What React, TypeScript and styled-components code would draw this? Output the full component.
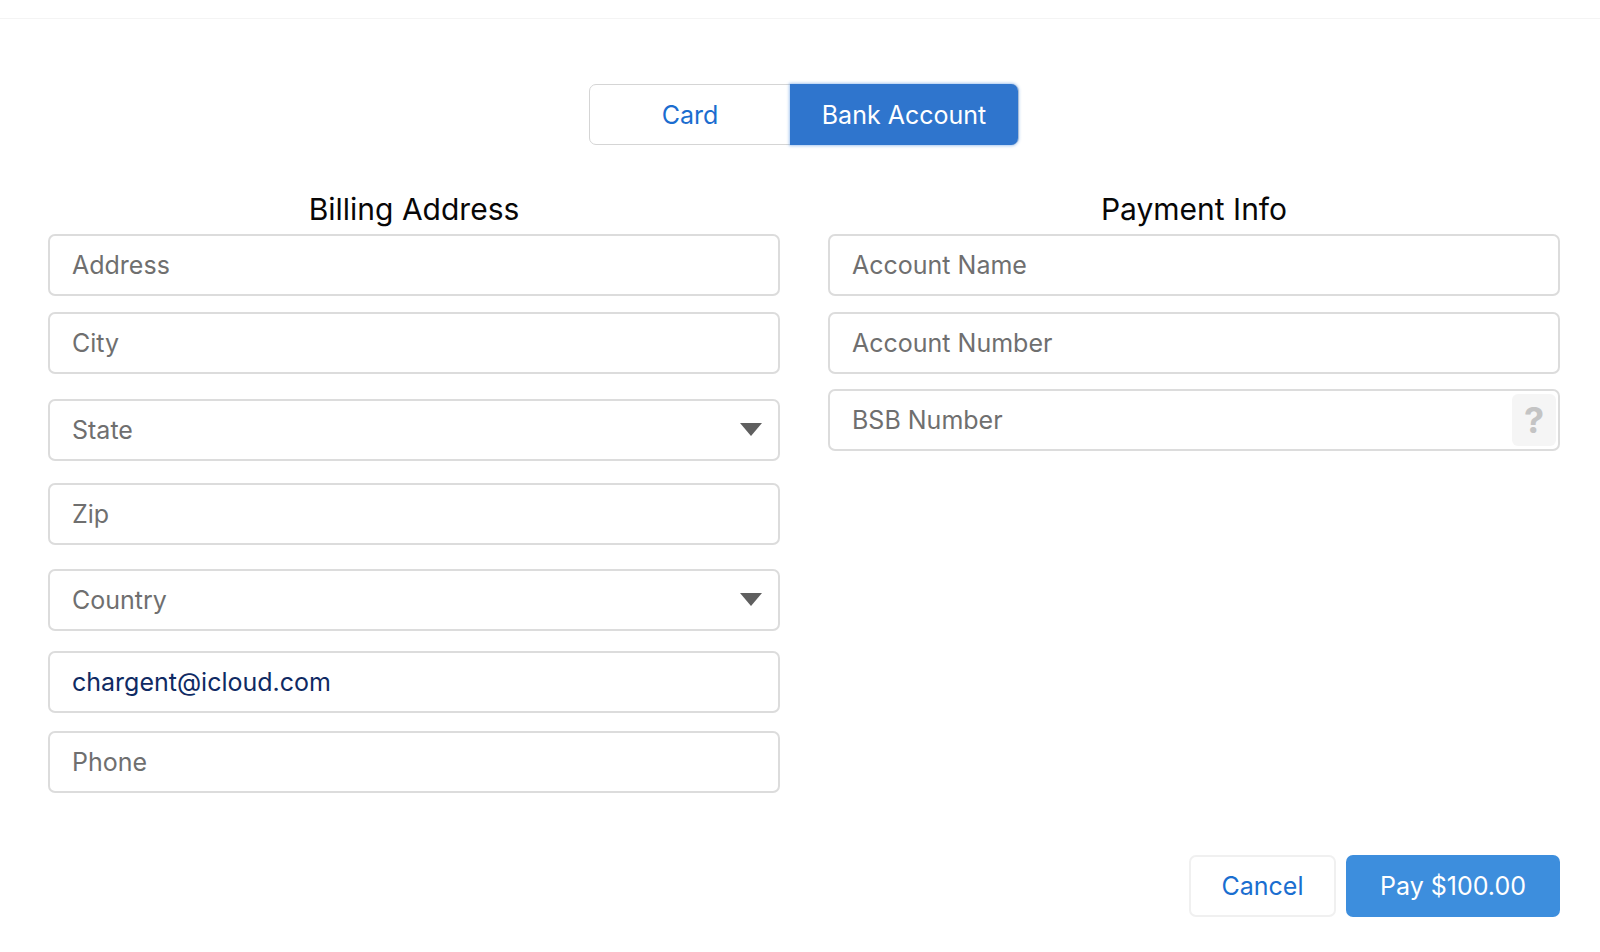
import React, { useState } from "react";
import styled, { createGlobalStyle } from "styled-components";

const GlobalStyle = createGlobalStyle`
  html, body {
    margin: 0;
    padding: 0;
    background: #fff;
    font-family: Inter, "Liberation Sans", Arial, sans-serif;
  }
`;

type FieldDef = {
  key: string;
  placeholder: string;
  kind?: "select" | "help";
  space: number;
};

const billing: FieldDef[] = [
  { key: "address", placeholder: "Address", space: 0 },
  { key: "city", placeholder: "City", space: 16 },
  { key: "state", placeholder: "State", kind: "select", space: 25 },
  { key: "zip", placeholder: "Zip", space: 22 },
  { key: "country", placeholder: "Country", kind: "select", space: 24 },
  { key: "email", placeholder: "Email", space: 20 },
  { key: "phone", placeholder: "Phone", space: 18 },
];

const payment: FieldDef[] = [
  { key: "accName", placeholder: "Account Name", space: 0 },
  { key: "accNumber", placeholder: "Account Number", space: 16 },
  { key: "bsb", placeholder: "BSB Number", kind: "help", space: 15 },
];

const App: React.FC = () => {
  const [mode, setMode] = useState<"card" | "bank">("bank");
  const [values, setValues] = useState<Record<string, string>>({
    email: "chargent@icloud.com",
  });

  const onChange = (key: string) => (e: React.ChangeEvent<HTMLInputElement>) => {
    setValues({ ...values, [key]: e.target.value });
  };

  const renderField = (f: FieldDef) => (
    <Field key={f.key} $space={f.space}>
      <TextInput
        placeholder={f.placeholder}
        value={values[f.key] || ""}
        onChange={onChange(f.key)}
      />
      {f.kind === "select" && (
        <Arrow viewBox="0 0 22 13">
          <path d="M0 0 L22 0 L11 13 Z" fill="#5f5f5f" />
        </Arrow>
      )}
      {f.kind === "help" && <HelpBox>?</HelpBox>}
    </Field>
  );

  return (
    <>
      <GlobalStyle />
      <TopBar />
      <Page>
        <ToggleRow>
          <Toggle>
            <Segment $active={mode === "card"} $w={200} onClick={() => setMode("card")}>
              Card
            </Segment>
            <Segment $active={mode === "bank"} $w={228} onClick={() => setMode("bank")}>
              Bank Account
            </Segment>
          </Toggle>
        </ToggleRow>

        <Columns>
          <Column>
            <Heading>Billing Address</Heading>
            {billing.map(renderField)}
          </Column>
          <Column>
            <Heading>Payment Info</Heading>
            {payment.map(renderField)}
          </Column>
        </Columns>

        <Actions>
          <CancelBtn type="button">Cancel</CancelBtn>
          <PayBtn type="button">Pay $100.00</PayBtn>
        </Actions>
      </Page>
    </>
  );
};

export default App;

const TopBar = styled.div`
  height: 18px;
  border-bottom: 1px solid #f4f4f4;
`;

const Page = styled.div`
  padding: 0 40px 0 48px;
`;

const ToggleRow = styled.div`
  display: flex;
  justify-content: center;
  padding-top: 65px;
`;

const Toggle = styled.div`
  display: flex;
  height: 61px;
  border: 1px solid #d5d5d5;
  border-radius: 7px;
  box-sizing: border-box;
`;

const Segment = styled.button<{ $active: boolean; $w: number }>`
  width: ${(p) => p.$w}px;
  height: 61px;
  margin: -1px 0;
  border: none;
  font-family: inherit;
  font-size: 25px;
  cursor: pointer;
  color: ${(p) => (p.$active ? "#ffffff" : "#1b6dcf")};
  background: ${(p) => (p.$active ? "#2f75cd" : "transparent")};
  border-radius: ${(p) => (p.$active ? "0 7px 7px 0" : "7px 0 0 7px")};
  box-shadow: ${(p) => (p.$active ? "0 0 3px 1px rgba(60,130,220,0.45)" : "none")};
  padding: 0;
`;

const Columns = styled.div`
  display: grid;
  grid-template-columns: 732px 732px;
  column-gap: 48px;
  margin-top: 46px;
`;

const Column = styled.div`
  display: flex;
  flex-direction: column;
`;

const Heading = styled.h2`
  margin: 0 0 7px;
  height: 36px;
  line-height: 36px;
  text-align: center;
  font-size: 30px;
  font-weight: 400;
  color: #080707;
`;

const Field = styled.div<{ $space: number }>`
  position: relative;
  margin-top: ${(p) => p.$space}px;
  height: 62px;
`;

const TextInput = styled.input`
  width: 100%;
  height: 62px;
  box-sizing: border-box;
  border: 2px solid #dcdcdc;
  border-radius: 7px;
  padding: 0 22px;
  font-family: inherit;
  font-size: 25px;
  color: #0f2a63;
  background: #fff;
  outline: none;

  &::placeholder {
    color: #6f6f6f;
  }
`;

const Arrow = styled.svg`
  position: absolute;
  right: 18px;
  top: 24px;
  width: 22px;
  height: 13px;
  pointer-events: none;
`;

const HelpBox = styled.div`
  position: absolute;
  right: 4px;
  top: 5px;
  width: 44px;
  height: 52px;
  border-radius: 6px;
  background: #f5f5f5;
  display: flex;
  align-items: center;
  justify-content: center;
  font-size: 36px;
  font-weight: 700;
  color: #c4c4c4;
`;

const Actions = styled.div`
  display: flex;
  justify-content: flex-end;
  gap: 10px;
  margin-top: 62px;
`;

const CancelBtn = styled.button`
  width: 147px;
  height: 62px;
  border: 2px solid #f0f0f0;
  border-radius: 7px;
  background: #fff;
  color: #1a6ed0;
  font-family: inherit;
  font-size: 25px;
  cursor: pointer;
`;

const PayBtn = styled.button`
  width: 214px;
  height: 62px;
  border: none;
  border-radius: 7px;
  background: #3d8edd;
  color: #fff;
  font-family: inherit;
  font-size: 25px;
  cursor: pointer;
`;
